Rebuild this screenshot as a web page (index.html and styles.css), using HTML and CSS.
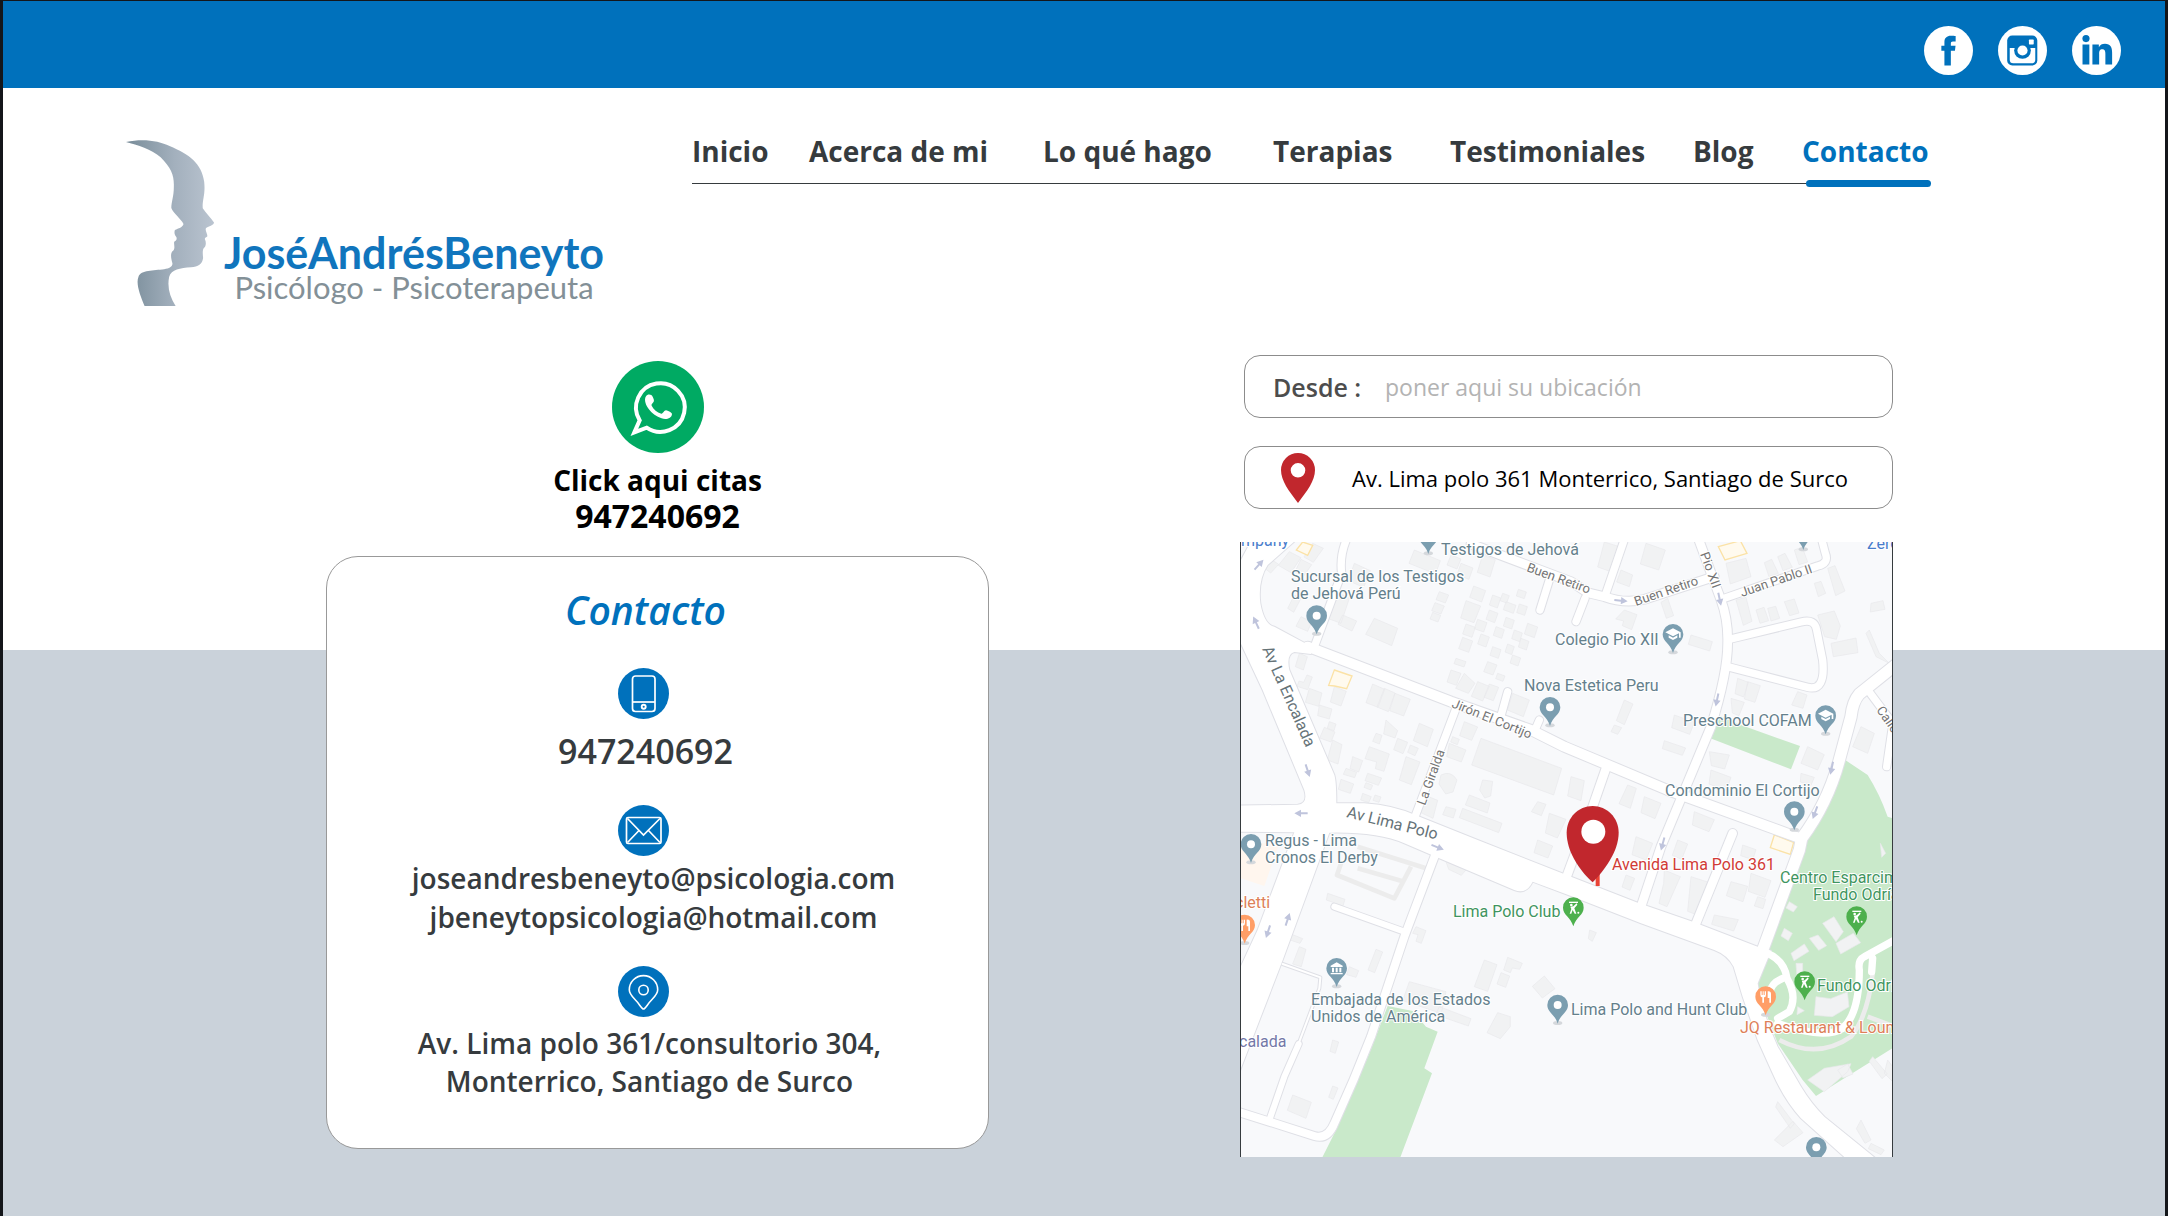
FILE: index.html
```html
<!DOCTYPE html>
<html lang="es">
<head>
<meta charset="utf-8">
<meta name="viewport" content="width=device-width, initial-scale=1">
<title>Contacto - José Andrés Beneyto</title>
<link rel="stylesheet" href="styles.css">
</head>
<body>
<div class="topbar">
  <a href="#facebook" aria-label="Facebook"><svg class="social" viewBox="0 0 48 48"><circle cx="24" cy="24" r="24" fill="#fff"/><path d="M31 9.8v5.3h-2.6c-1.6 0-2.1.7-2.1 2v2.2h4.6l-.6 5h-4v14.4H20V24.300h-3v-5h3v-3.500c0-4 2.400-6.200 6.300-6.200 2 0 3.700.1 4.700.2z" fill="#0071bc"/></svg></a>
  <a href="#instagram" aria-label="Instagram"><svg class="social" viewBox="0 0 48 48"><circle cx="24" cy="24" r="24" fill="#fff"/><rect x="9" y="9.300" width="29.500" height="29.500" rx="5" fill="#0071bc"/><path d="M11.500 21.500h25V33a3.500 3.500 0 0 1-3.500 3.500H15A3.500 3.500 0 0 1 11.500 33z" fill="#fff"/><circle cx="24" cy="24" r="8.200" fill="#0071bc"/><circle cx="24" cy="24" r="5" fill="#fff"/><rect x="30.300" y="13.300" width="4.700" height="4.700" rx=".6" fill="#fff"/></svg></a>
  <a href="#linkedin" aria-label="LinkedIn"><svg class="social" viewBox="0 0 48 48"><circle cx="24" cy="24" r="24" fill="#fff"/><g fill="#0071bc"><circle cx="13.700" cy="12.300" r="3.500"/><path d="M10.300 18H17v19.700h-6.700zM20 18h6.300v2.700c1.200-2 3.200-3.200 6-3.200 5.500 0 7 3.500 7 8.700v11.500h-6.600V27.500c0-2.600-.4-4.800-3-4.800s-3.100 2-3.100 4.600v10.400H20z"/></g></svg></a>
</div>

<header class="header">
  <a class="logo" href="#inicio">
    <svg class="logo-head" viewBox="0 0 88 168" aria-hidden="true">
      <defs><linearGradient id="steel" x1="0" x2="1"><stop offset="0" stop-color="#788c99"/><stop offset=".55" stop-color="#a3b0bd"/><stop offset="1" stop-color="#bac4d0"/></linearGradient></defs>
      <g transform="scale(.357 .3333) translate(-73 -57)"><path fill="url(#steel)" d="M73 66C120 55 165 62 195 78C250 103 285 130 292 185C296 225 286 240 288 265C297 280 310 293 320 308C315 320 300 319 297 325C294 332 301 340 301 349C298 354 293 352 294 358C298 366 297 376 294 381C286 387 288 400 289 414C287 432 275 440 255 442C225 444 200 449 194 470C188 500 195 530 212 558H125C112 525 100 490 108 470C115 450 150 452 180 448C195 445 204 440 203 430C199 415 197 402 203 394C213 385 206 375 208 365C215 362 216 356 214 351C210 345 207 340 210 330C220 325 232 322 234 312C228 297 205 280 200 264C200 245 207 230 207 200C208 165 200 145 170 112C145 88 105 75 73 66Z"/></g>
    </svg>
    <span class="logo-text">
      <span class="logo-name">JoséAndrésBeneyto</span>
      <span class="logo-role">Psicólogo - Psicoterapeuta</span>
    </span>
  </a>
  <nav class="nav">
    <a href="#inicio">Inicio</a>
    <a href="#acerca">Acerca de mi</a>
    <a href="#hago">Lo qué hago</a>
    <a href="#terapias">Terapias</a>
    <a href="#testimoniales">Testimoniales</a>
    <a href="#blog">Blog</a>
    <a class="active" href="#contacto" aria-current="page">Contacto</a>
  </nav>
</header>

<main class="main">
  <section class="contact">
    <a class="whatsapp" href="#whatsapp">
      <svg class="whatsapp-icon" viewBox="0 0 276 276" aria-hidden="true"><circle cx="138" cy="138" r="138" fill="#00aa63"/><path d="M67 214L83 178A73 73 0 1 1 104 200Z" fill="none" stroke="#fff" stroke-width="12"/><path d="M102 106C106 98 119 99 122 107C125 113 127 118 125 122C121 128 117 129 119 134C125 146 135 154 148 158C153 159 156 148 162 148C168 149 177 153 180 158C180 169 169 174 160 174C130 170 100 142 99 116C99 112 100 109 102 106Z" fill="#fff"/></svg>
      <span class="whatsapp-title">Click aqui citas</span>
      <span class="whatsapp-number">947240692</span>
    </a>
    <div class="card">
      <h1>Contacto</h1>
      <svg class="card-icon" viewBox="0 0 51 51" aria-hidden="true"><circle cx="25.500" cy="25.500" r="25.500" fill="#0071bc"/><g fill="none" stroke="#fff" stroke-width="1.700"><rect x="14.500" y="8" width="22.500" height="35.500" rx="3"/><path d="M14.500 34h22.500"/><circle cx="25.700" cy="38.700" r="2" stroke-width="1.900"/></g></svg>
      <p class="phone">947240692</p>
      <svg class="card-icon" viewBox="0 0 51 51" aria-hidden="true"><circle cx="25.500" cy="25.500" r="25.500" fill="#0071bc"/><g fill="none" stroke="#fff" stroke-width="1.700"><rect x="8.500" y="12.500" width="34.500" height="26" rx="1.500"/><path d="M9.500 13.500L25.500 30L42 13.500M9.500 37.500L21 25.500M42 37.500L30.500 25.500"/></g></svg>
      <p class="mail">joseandresbeneyto@psicologia.com<br>jbeneytopsicologia@hotmail.com</p>
      <svg class="card-icon" viewBox="0 0 51 51" aria-hidden="true"><circle cx="25.500" cy="25.500" r="25.500" fill="#0071bc"/><g fill="none" stroke="#fff" stroke-width="1.600"><path d="M25.500 43C23.500 43 22 38.500 17 33.500C13 29.500 11.300 27.500 11.300 23.800A14.200 14.200 0 0 1 39.700 23.800C39.700 27.500 38 29.500 34 33.500C29 38.500 27.500 43 25.500 43Z"/><circle cx="25.500" cy="24" r="4.700"/></g></svg>
      <p class="street">Av. Lima polo 361/consultorio 304,<br>Monterrico, Santiago de Surco</p>
    </div>
  </section>

  <section class="location">
    <form class="route">
      <div class="field">
        <label for="from">Desde :</label>
        <input id="from" type="text" placeholder="poner aqui su ubicación">
      </div>
      <div class="field destination">
        <svg class="field-pin" viewBox="0 0 34 50" aria-hidden="true"><path fill-rule="evenodd" d="M17 0A17 17 0 0 1 34 17C34 28 26 38 17 50C8 38 0 28 0 17A17 17 0 0 1 17 0ZM17 10A7.300 7.300 0 1 0 17 24.600A7.300 7.300 0 1 0 17 10Z" fill="#c1272d"/></svg>
        <span>Av. Lima polo 361 Monterrico, Santiago de Surco</span>
      </div>
    </form>
    <svg class="map" viewBox="0 0 651 615" role="img" aria-label="Mapa de Avenida Lima Polo 361">
      <defs>
        <path id="pin" d="M-31 0A31 31 0 1 1 31 0C31 22 8 28 0 56C-8 28 -31 22 -31 0Z"/>
        <g id="place"><ellipse cy="54" rx="14" ry="6" fill="#d5d8dc"/><use href="#pin" fill="#7b9eb0"/><circle r="12" fill="#fff"/></g>
        <g id="school"><ellipse cy="54" rx="14" ry="6" fill="#d5d8dc"/><use href="#pin" fill="#7b9eb0"/><path d="M-23 -6L0 -18L23 -6V10H18V-3L0 6ZM-13 3L0 10L13 3V10L0 17L-13 10Z" fill="#fff"/></g>
        <g id="museum"><ellipse cy="54" rx="14" ry="6" fill="#d5d8dc"/><use href="#pin" fill="#7b9eb0"/><path d="M-18 -8L0 -18L18 -8V-4H-18ZM-14 -2h6v14h-6zM-3 -2h6v14h-6zM8 -2h6v14H8zM-18 14h36v4h-36z" fill="#fff"/></g>
        <g id="golf"><use href="#pin" fill="#4db04d"/><path d="M-13 -16H14" stroke="#fff" stroke-width="4"/><circle cx="-6" cy="-8" r="4" fill="#fff"/><path d="M-9 -3L0 -4L10 -13L12 -9L3 2L9 18H4L-2 7L-6 18H-11L-6 4Z" fill="#fff"/><circle cx="15" cy="15" r="3" fill="#fff"/></g>
        <g id="food"><ellipse cy="54" rx="14" ry="6" fill="#d5d8dc"/><use href="#pin" fill="#ff9e67"/><path d="M-16 -16V-6Q-16 2 -10 2V18H-5V2Q1 2 1 -6V-16H-3V-5H-6V-16H-9V-5H-12V-16ZM6 -16Q16 -18 16 -8V18H11V4H6Z" fill="#fff"/></g>
        <path id="arrow" d="M-3 -20H3V0H11L0 20L-11 0H-3Z" fill="#bfc4dc"/>
        <g id="roads" fill="none" stroke-linecap="round" stroke-linejoin="round">
          <path class="w30" d="M230 350L660 515L900 600L1000 650L1310 780L1700 922"/>
          <path class="w22" d="M350 20Q325 75 332 130L250 350"/>
          <path class="w22" d="M675 535L552 860M830 485L807 568M925 570L912 600"/>
          <path class="w26" d="M720 42L1020 155L1070 188L1120 200Q1180 222 1240 208L1450 140"/>
          <path class="w22" d="M955 150L927 240M1062 205L1035 275M1183 20L1123 195"/>
          <path class="w26" d="M1400 20L1470 210Q1492 270 1490 340Q1490 430 1440 590L1290 950L1230 1130"/>
          <path class="w22" d="M1480 205L1760 108Q1795 100 1783 70L1770 20"/>
          <path class="w22" d="M1495 328L1710 276Q1752 265 1757 300L1775 390Q1785 485 1730 472L1490 410"/>
          <path class="w34" d="M2000 400L1885 492Q1865 515 1860 560L1825 690Q1790 820 1712 925L1705 960L1595 1260"/>
          <path class="w22" d="M1912 482L2000 600M1983 600L1967 710"/>
          <path class="w26" d="M1125 715L1085 830L1005 1045M1505 910L1395 1180"/>
          <path class="w24" d="M615 968L520 1220L420 1520Q370 1650 310 1780Q290 1830 250 1818L115 1775L20 1745"/>
          <path class="w16" d="M310 1130L520 1205M203 1542L160 1640L115 1770"/>
          <path class="w6" d="M155 1302L268 1342L265 1375L205 1535"/>
        </g>
        <g id="avenues" stroke-linejoin="round">
          <path d="M30 90L62 30H195L110 105Q80 150 88 220Q100 285 130 290L245 352L240 372L190 366Q165 372 175 420L310 735Q316 755 316 820H400Q490 826 560 858L740 930L1020 1040L1220 1118L1385 1175L1580 1250L1620 1262L1580 1360Q1590 1440 1640 1550L1710 1670Q1740 1720 1780 1760L1940 1890H1850L1710 1765Q1660 1710 1625 1630L1580 1530L1535 1400L1508 1310Q1490 1275 1450 1260L1230 1180L1020 1098L905 1055Q885 1095 850 1080L625 985L520 940Q440 905 295 908L155 1290L20 1640V1330L80 1200L190 907L20 905V827L200 824Q232 820 220 780L95 480L20 320Z"/>
        </g>
      </defs>
      <rect width="651" height="615" fill="#f8f9fb"/>
      <g transform="scale(.33333) translate(-30 -36)">
        <path fill="#c9e9ca" d="M470 1428L545 1443L585 1490L620 1505L580 1615L603 1630L505 1890H270L320 1790L415 1570ZM1460 555L1438 625L1680 718L1707 648L1530 585Z"/>
        <path fill="#c9e9ca" d="M1835 685L1910 735Q1945 790 1970 860L2000 870V1545L1755 1698L1715 1650L1640 1540L1570 1360L1700 1000Z"/>
        <path fill="#fff6ee" d="M30 940H145L100 1068L30 1045Z"/>
        <g class="buildings">
          <path d="M115 85l28 18l-24 26l-20-16zM175 65l35 18l-30 45l-38-22zM210 88l32 16l-25 36l-25-15zM245 40l32 15l-30 42l-28-16zM190 195l20 10l-22 42l-18-12zM210 260l32 16l-12 28l-35-15zM325 190l30 15l-25 75l-40-15zM335 255l42 18l-14 30l-42-20zM370 100l48 22l-20 50l-46-20zM430 265l70 30l-18 52l-78-34zM550 60l78 32l-14 40l-80-32zM660 75l30 12l-12 30l-30-12zM625 185l28 10l-10 24l-28-10zM612 218l28 10l-10 24l-28-10zM605 247l24 9l-8 20l-24-9zM755 75l38 14l-16 52l-38-14z"/>
          <path d="M690 100l36 14l-12 34l-36-14zM728 168l36 14l-12 34l-36-14zM705 212l44 16l-20 50l-40-14zM785 195l24 9l-10 30l-24-9zM815 190l20 7l-8 22l-20-7zM825 215l30 11l-8 24l-30-11zM862 178l24 8l-6 20l-24-8zM865 222l24 8l-8 26l-24-8zM775 240l26 10l-10 28l-26-10zM740 268l28 10l-10 28l-28-10zM705 282l28 10l-10 30l-28-10zM695 322l30 11l-12 34l-30-11zM750 312l25 9l-10 30l-25-9zM795 290l25 9l-8 26l-25-9zM825 262l25 9l-8 26l-25-9zM850 300l24 9l-8 26l-24-9zM890 280l30 11l-10 32l-30-11zM870 325l24 9l-8 26l-24-9zM785 350l25 9l-8 26l-25-9zM830 342l20 8l-8 24l-20-8zM845 375l24 9l-8 24l-24-9zM770 395l28 10l-12 30l-28-10zM800 430l22 8l-6 16l-22-8zM675 385l30 10l-6 16l-30-10zM660 420l30 10l-14 36l-28-10zM700 430l32 30l-20 30l-38-15zM740 455l35 14l-20 44l-34-14zM775 462l28 10l-16 40l-28-10zM845 490l50 20l-18 50l-48-20z"/>
          <path d="M205 370l24 10l-12 40l-24-10zM228 435l16 6l-14 38l-32-10l6-16l14 4zM235 475l38 14l-10 40l-40-12zM265 525l38 12l-8 30l-35-10zM310 470l36 14l-16 44l-32-12zM425 462l36 16l-20 54l-36-14zM460 475l32 14l-20 56l-34-14zM492 490l46 18l-20 50l-42-16zM465 570l35 32l-8 22l-34-12zM295 575l20 7l-6 20l-20-7zM280 592l32 14l-12 30l-34-12zM305 630l28 14l-12 58l-32-12zM435 610l18 6l-8 26l-20-8zM565 580l42 18l-18 52l-42-18zM500 625l30 12l-14 34l-28-12zM538 645l24 10l-10 22l-22-10zM415 650l60 22l-16 52l-26-8l4-20l-35-10zM365 680l30 12l-12 34l-26-10zM345 715l32 12l-6 16l-34-10zM330 748l38 14l-10 28l-36-12zM410 730l42 14l-10 22l-40-14zM405 758l20 8l-6 14l-20-8zM395 790l26 10l-8 18l-24-8zM432 795l18 6l-6 16l-18-6zM525 680l42 16l-26 68l-36-14zM700 575l40 16l-18 40l-36-14zM665 620l20 8l-6 16l-20-8zM655 640l50 20l-14 36l-44-16zM630 735q30-15 48 15l-12 36l-22 6l-20-30zM755 750l30 4l-6 44l-18 6l-15-24zM715 795l62 24l-8 30l-66-24zM695 835l118 45l-10 28l-118-45zM750 625l242 90l-24 80l-246-90zM580 795l40 16l-14 54l-38-18zM920 815l25 8l-14 34l-30-12zM955 850l50 18l-26 56l-36-15zM920 930l45 18l-14 36l-42-16zM645 830l30 8l-8 26l-32-10z"/>
          <path d="M1120 36l45 14l-25 75l-40-14zM1245 40l58 20l-20 60l-55-18zM1170 120l35 15l-10 35l-38-14zM1180 240l38 14l-16 45l-28-12l4-14l-24-6zM1310 205l18 52l-22 8l-16-48zM1380 315l64 20l-8 28l-64-20zM1485 100l60-15l15 55l-62 22zM1640 80l22-10l22 42l-28 10zM1600 98l22-10l20 42l-28 10zM1690 60l24-8l16 44l-26 8zM1515 210l30-8l18 72l-26 12zM1575 240l24-8l14 40l-26 8zM1610 235l24-6l12 36l-26 8zM1660 215l30-8l14 42l-28 8zM1750 160l20-6l14 36l-22 10zM1790 115l22-8l30 76l-28 14zM1760 255l50-12l18 45l-12 40l-35-8zM1800 340l75-16l6 44l-74 12zM1520 445l32 12l-14 44l-26-10zM1550 455l38 12l-16 50l-32-10zM1700 485l28 10l-12 40l-34-10zM1500 505l40 12l-16 40l-20-8zM1730 650l50 24l-20 46l-50-20zM1710 730l40 12l-10 24l-32-10zM1180 510l26 12l-26 62l-24-12zM1300 632l64 22l-10 22l-60-20zM1330 555l60 22l-14 36l-54-20zM1150 585l22 8l-12 20l-20-8zM1435 665l60 10l-14 42l-40-10zM1890 590l40 20l-20 60l-45-20zM1920 220l36-8l6 26l-44 8zM1915 300l30 70l30 30l-40-20l-30-70z"/>
          <path d="M1020 740l40 12l-10 60l-40-14zM1190 765l26 10l-18 60l-34-14zM1240 800l50 20l-18 46l-42-18zM1390 845l60 24l-16 36l-50-20zM1440 720l60 22l-14 40l-52-20zM1215 920l50 20l-20 50l-42-16zM1340 930l30 12l-18 46l-28-12zM1185 1035l26 10l-14 36l-24-10zM1300 1020l48 20l-40 90l-24-10l14-60zM1380 1040l50 16l-28 100l-32-12zM1500 1055l50 14l-14 46l-50-18zM1450 1155l72 14l-14 34l-66-20zM1560 1030l60 22l-18 50l-50-18zM1535 945l40 14l-10 30l-36-12zM1580 1100l24 8l-8 28l-26-8z"/>
          <path d="M535 1355l110 30l-14 65l-116-38zM290 1090l52 18l-6 20l-50-18zM205 1250l20 8l-14 52l-26-8zM180 1212l35 14l-8 14l-36-12zM435 1258l20 8l-24 62l-20-8zM355 1310l28 12l-8 20l-28-8zM555 1190l30 12l-14 38l-16-6l6-20l-16-4zM760 1290l38 14l-28 80l-40-14zM830 1282l44 18l-8 18l-22-4l-6 14l-20-8zM810 1328l26 10l-12 34l-26-10zM940 1338l32 38l-38 28l-30-35zM800 1448l38 12v30l-30 36l-40-18zM625 1430l95 36l-8 22l-98-34zM305 1530l18 6l-10 34l-16-6zM305 1668l16 6l-14 34l-14-6zM185 1695l56 22l-16 48l-56-24zM645 995l60 25l-14 16l-38-18zM1076 1200l20 8l-12 26l-12-8z"/>
          <path d="M1675 1115l24 15l-12 16l-22-12zM1660 1195l24 15l-12 22l-22-14zM1680 1270l40-28l14 22l-45 28zM1735 1225l26-10l26 32l-24 14zM1775 1180l34-20l28 45l-22 30zM1815 1240l52-30l22 28l-60 34zM1755 1400l44 6l50-20l5 44l-50 30l-54-4zM1695 1300h20v34l-16 20zM1700 1430l20 12l-22 12zM1730 1650l50-35l80-14l-10 24l-70 60zM1820 1620l30-18l16 30l-30 12zM1640 1715l50 66l-12 14l-44-64zM1630 1830l56-56l30 34l-60 42zM1890 1770l30 60l-18 10l-26-44zM1920 1840l40 20l-10 14l-38-18zM1925 1580l44 52l-16 14l-38-52zM1970 1590l30 40v40l-40-40zM1948 940l16 30l-12 12z"/>
        </g>
        <g class="yellow"><path d="M215 36l30 10l-15 30l-34-16zM310 420l53 18l-16 38l-36-8l-18-2zM1462 50l66-18l20 38l-66 20zM1630 915l58 22l-10 36l-60-20z"/></g>
        <g fill="none" stroke="#ececec" stroke-width="14" stroke-linejoin="round"><path d="M330 1000L318 1035L490 1105L540 1010M380 950L585 1015M380 1015L520 1055M1645 1530Q1760 1590 1860 1520Q1910 1460 1925 1330M1910 1460L1990 1490"/></g>
        <g class="casing"><use href="#roads"/><use href="#avenues" fill="#dfe0e6" stroke-width="6"/></g>
        <g class="surface"><use href="#roads"/><use href="#avenues" fill="#fff" stroke="none"/></g>
        <g fill="none" stroke="#fff" stroke-width="22" stroke-linecap="round" stroke-linejoin="round"><path d="M1605 1268Q1660 1290 1668 1345Q1700 1400 1675 1445L1640 1465M1655 1345Q1620 1360 1618 1385M2000 1225L1900 1280Q1880 1290 1885 1320Q1885 1450 1835 1495Q1780 1530 1640 1480M1925 1285L1922 1325"/></g>
        <use href="#arrow" transform="translate(84 104) rotate(222)"/><use href="#arrow" transform="translate(75 278) rotate(155)"/><use href="#arrow" transform="translate(230 722) rotate(-18)"/><use href="#arrow" transform="translate(210 850) rotate(90)"/><use href="#arrow" transform="translate(620 952) rotate(-68)"/><use href="#arrow" transform="translate(111 1205) rotate(18)"/><use href="#arrow" transform="translate(170 1168) rotate(198)"/><use href="#arrow" transform="translate(1170 212) rotate(-85)"/><use href="#arrow" transform="translate(1466 208) rotate(-12)"/><use href="#arrow" transform="translate(1458 510) rotate(12)"/><use href="#arrow" transform="translate(1802 715) rotate(12)"/><use href="#arrow" transform="translate(1752 848) rotate(20)"/><use href="#arrow" transform="translate(1295 942) rotate(15)"/>
        <use href="#place" x="257" y="257"/><use href="#place" x="592" y="16"/><use href="#place" x="957" y="532"/><use href="#school" x="1326" y="313"/><use href="#school" x="1784" y="557"/><use href="#place" x="1690" y="845"/><use href="#place" x="1717" y="4"/><use href="#place" x="60" y="943"/><use href="#food" x="41" y="1185"/><use href="#museum" x="317" y="1315"/><use href="#place" x="980" y="1425"/><use href="#golf" x="1027" y="1133"/><use href="#golf" x="1877" y="1160"/><use href="#golf" x="1721" y="1355"/><use href="#food" x="1604" y="1400"/><use href="#place" x="1756" y="1852"/>
        <path d="M1100 1030V1068" stroke="#ea4335" stroke-width="12"/>
        <path fill="#c1272d" d="M1085 828C1128 828 1163 863 1163 908C1163 965 1120 1020 1085 1057C1045 1020 1007 965 1007 908C1007 863 1042 828 1085 828Z"/><circle cx="1087" cy="905" r="36" fill="#fff"/>
      </g>
      <g class="map-labels">
        <text x="0" y="4" class="blue">mpany</text><text x="626" y="7" class="blue">Zero</text>
        <text x="200" y="13">Testigos de Jehová</text>
        <text x="50" y="40">Sucursal de los Testigos</text><text x="50" y="57">de Jehová Perú</text>
        <text x="314" y="103">Colegio Pio XII</text><text x="283" y="149">Nova Estetica Peru</text>
        <text x="442" y="184">Preschool COFAM</text><text x="424" y="254">Condominio El Cortijo</text>
        <text x="24" y="304">Regus - Lima</text><text x="24" y="321">Cronos El Derby</text>
        <text x="-6" y="366" class="orange">cletti</text><text x="-2" y="505" class="violet">calada</text>
        <text x="70" y="463">Embajada de los Estados</text><text x="70" y="480">Unidos de América</text>
        <text x="330" y="473">Lima Polo and Hunt Club</text>
        <text x="212" y="375" class="green">Lima Polo Club</text><text x="539" y="341" class="green">Centro Esparcimiento</text><text x="572" y="358" class="green">Fundo Odría</text><text x="576" y="449" class="green">Fundo Odría</text>
        <text x="371" y="328" class="red">Avenida Lima Polo 361</text><text x="499" y="491" class="orange">JQ Restaurant &amp; Lounge</text>
        <g class="streets">
          <text transform="translate(21 107) rotate(66)" class="avenue">Av La Encalada</text>
          <text transform="translate(105 275) rotate(14)" class="avenue">Av Lima Polo</text>
          <text transform="translate(210 165) rotate(22)">Jirón El Cortijo</text>
          <text transform="translate(184 264) rotate(-70)">La Giralda</text>
          <text transform="translate(285 29) rotate(20)">Buen Retiro</text>
          <text transform="translate(395 64) rotate(-19)">Buen Retiro</text>
          <text transform="translate(459 12) rotate(70)">Pio XII</text>
          <text transform="translate(501 55) rotate(-19)">Juan Pablo II</text>
          <text transform="translate(635 168) rotate(55)">Calle</text>
        </g>
      </g>
    </svg>
  </section>
</main>
</body>
</html>
```
FILE: styles.css
```css
* { box-sizing: border-box; }

body {
  margin: 0;
  min-height: 100vh;
  display: flex;
  flex-direction: column;
  border: 3px solid #14161a;
  border-width: 1px 3px 0;
  background: #cad2da;
  font-family: "Open Sans", "Noto Sans", sans-serif;
  color: #363b3e;
}

a { color: inherit; text-decoration: none; }
svg { display: block; }

.topbar {
  display: flex;
  justify-content: flex-end;
  gap: 25px;
  padding: 25px 44px 13px;
  background: #0071bc;
}
.social { width: 49px; height: 49px; }

.header {
  display: grid;
  grid-template-columns: minmax(0, 506fr) minmax(0, 1239fr);
  column-gap: 60px;
  align-items: start;
  padding: 31px 234px 3px 123px;
  background: #fff;
}

.logo { display: flex; gap: 10px; align-items: flex-end; padding-top: 20px; }
.logo-head { flex: none; width: 88px; height: 168px; }
.logo-text {
  display: flex;
  flex-direction: column;
  align-items: center;
  padding-bottom: 3px;
  font-family: Lato, sans-serif;
  line-height: 34px;
  white-space: nowrap;
}
.logo-name { font-size: 43px; font-weight: 700; color: #1075bd; }
.logo-role { font-size: 31px; color: #839097; }

.nav {
  display: grid;
  grid-template-columns: 117fr 234fr 230fr 177fr 243fr 109fr 129fr;
  height: 65px;
  border-bottom: 1px solid #363b3e;
  font-size: 28px;
  font-weight: 700;
  line-height: 64px;
  white-space: nowrap;
}
.nav .active { position: relative; color: #0071bc; }
.nav .active::after {
  content: "";
  position: absolute;
  left: 4px;
  right: 0;
  bottom: -4px;
  height: 7px;
  border-radius: 4px;
  background: #0071bc;
}

.main {
  flex: 1;
  display: grid;
  grid-template-columns: 323fr minmax(0, 663fr) 251fr minmax(0, 653fr) 272fr;
  padding-bottom: 59px;
  background: linear-gradient(#fff 340px, #cad2da 340px);
}
.contact { grid-column: 2; padding-top: 51px; }
.location { grid-column: 4; padding-top: 45px; }

.whatsapp {
  display: flex;
  flex-direction: column;
  align-items: center;
  font-weight: 700;
  color: #000;
}
.whatsapp-icon { width: 92px; height: 92px; margin-bottom: 8px; }
.whatsapp-title { font-size: 28px; line-height: 38px; }
.whatsapp-number { font-size: 32px; line-height: 34px; }

.card {
  display: flex;
  flex-direction: column;
  align-items: center;
  margin-top: 23px;
  padding: 27px 28px 48px 0;
  border: 1px solid #999;
  border-radius: 32px;
  background: #fff;
  font-weight: 600;
  text-align: center;
}
.card h1 {
  margin: 0 0 32px;
  padding-left: 4px;
  font-size: 39px;
  font-weight: 600;
  font-style: italic;
  line-height: 52px;
  color: #0071bc;
}
.card p { margin: 0; }
.card-icon { width: 51px; height: 51px; }
.card .phone { font-size: 34px; line-height: 48px; padding: 8px 0 30px 4px; }
.card .mail { font-size: 28px; line-height: 39px; padding: 3px 0 29px 20px; }
.card .street { font-size: 28px; line-height: 38px; padding: 7px 0 0 12px; }

.route { display: grid; gap: 28px; margin: 0 0 33px 4px; }
.field {
  display: flex;
  align-items: center;
  height: 63px;
  padding: 0 28px;
  border: 1px solid #8c8c8c;
  border-radius: 16px;
  background: #fff;
  white-space: nowrap;
}
.field label { flex: none; width: 112px; font-size: 25px; line-height: 30px; font-weight: 600; color: #4d4d4d; }
.field input {
  flex: 1;
  min-width: 0;
  padding: 0;
  border: 0;
  outline: 0;
  background: none;
  font: 500 23px "Open Sans", sans-serif;
  color: #4d4d4d;
}
.field input::placeholder { color: #b3b3b3; opacity: 1; }
.field-pin { flex: none; width: 34px; height: 50px; margin: 0 37px 0 8px; }
.destination { color: #000; font-size: 22px; }

.map {
  width: 100%;
  height: auto;
  border: 1px solid #363b3e;
  border-width: 0 1px;
  overflow: hidden;
}
.w6 { --w: 6px; }
.w16 { --w: 18px; }
.w22 { --w: 22px; }
.w24 { --w: 24px; }
.w26 { --w: 26px; }
.w30 { --w: 30px; }
.w34 { --w: 34px; }
#roads path { stroke-width: calc(var(--w) + var(--edge)); }
.casing { --edge: 6px; stroke: #dfe0e6; }
.surface { --edge: 0px; stroke: #fff; }
.buildings { fill: #f1f2f3; stroke: #e8e9eb; stroke-width: 2; }
.yellow { fill: #fffaee; stroke: #fbe2a6; stroke-width: 4; }

.map-labels {
  font-family: Roboto, sans-serif;
  font-size: 16px;
  fill: #64808c;
  stroke: #fff;
  stroke-width: 2px;
  paint-order: stroke;
}
.map-labels .green { fill: #3f9560; }
.map-labels .orange { fill: #dd8058; }
.map-labels .red { fill: #d13b36; }
.map-labels .blue { fill: #4a7dcc; }
.map-labels .violet { fill: #7378a8; }
.map-labels .streets { font-size: 13px; fill: #757575; }
.map-labels .streets .avenue { font-size: 16px; fill: #667378; }
```
